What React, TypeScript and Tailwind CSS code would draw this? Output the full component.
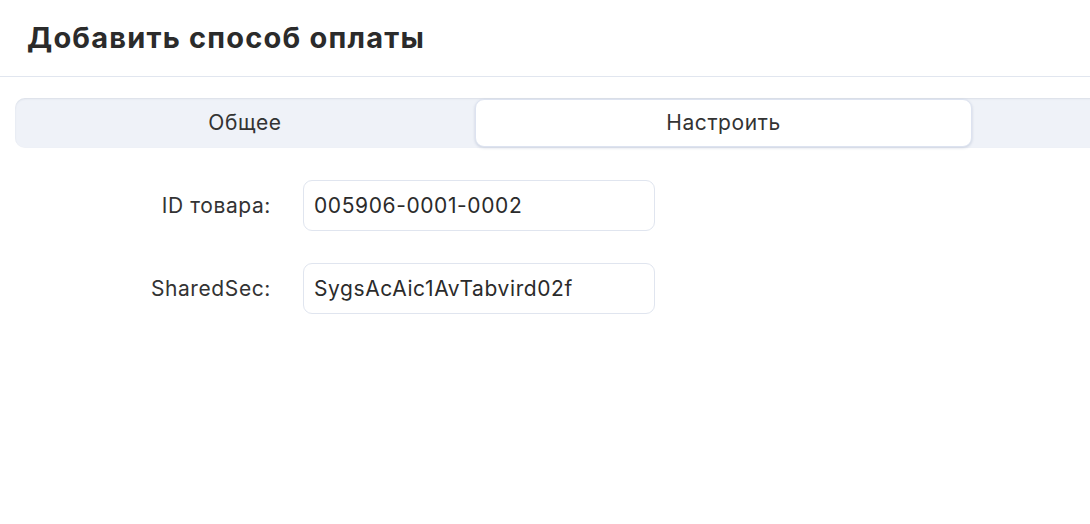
export default function App() {
  return (
    <div className="h-[524px] w-[1090px] overflow-hidden bg-white font-['Inter',sans-serif] text-[#2e2e2e]">
      {/* Header */}
      <div className="flex h-[77px] items-center border-b border-[#e1e6ef] px-[27px] pb-[1px]">
        <h1 className="text-[29px] font-bold tracking-[1.2px] text-[#2b2b2b]">Добавить способ оплаты</h1>
      </div>

      {/* Tabs */}
      <div className="mt-[21px] pl-[15px]">
        <div className="flex h-[50px] w-[1200px] rounded-[10px] bg-[#eff2f8] shadow-[inset_0_1px_2px_rgba(30,50,90,0.10)]">
          <button className="flex w-[460px] items-center justify-center text-[21px] tracking-[0.6px] text-[#333]">Общее</button>
          <button className="my-[1px] flex w-[497px] items-center justify-center rounded-[9px] border border-[#dde3f0] bg-white text-[21px] tracking-[0.6px] text-[#333] shadow-[0_1px_3px_rgba(40,60,110,0.18)]">
            Настроить
          </button>
        </div>
      </div>

      {/* Form */}
      <div className="mt-[32px] flex flex-col gap-[32px]">
        <div className="flex items-center">
          <label className="w-[271px] text-right text-[21px] tracking-[0.6px] text-[#333]">ID товара:</label>
          <div className="ml-[32px] flex h-[51px] w-[352px] items-center rounded-[9px] border border-[#e0e5ef] px-[10px] text-[21px] tracking-[0.6px] text-[#2b2b2b]">
            005906-0001-0002
          </div>
        </div>
        <div className="flex items-center">
          <label className="w-[271px] text-right text-[21px] tracking-[0.6px] text-[#333]">SharedSec:</label>
          <div className="ml-[32px] flex h-[51px] w-[352px] items-center rounded-[9px] border border-[#e0e5ef] px-[10px] text-[21px] tracking-[0.6px] text-[#2b2b2b]">
            SygsAcAic1AvTabvird02f
          </div>
        </div>
      </div>
    </div>
  );
}
